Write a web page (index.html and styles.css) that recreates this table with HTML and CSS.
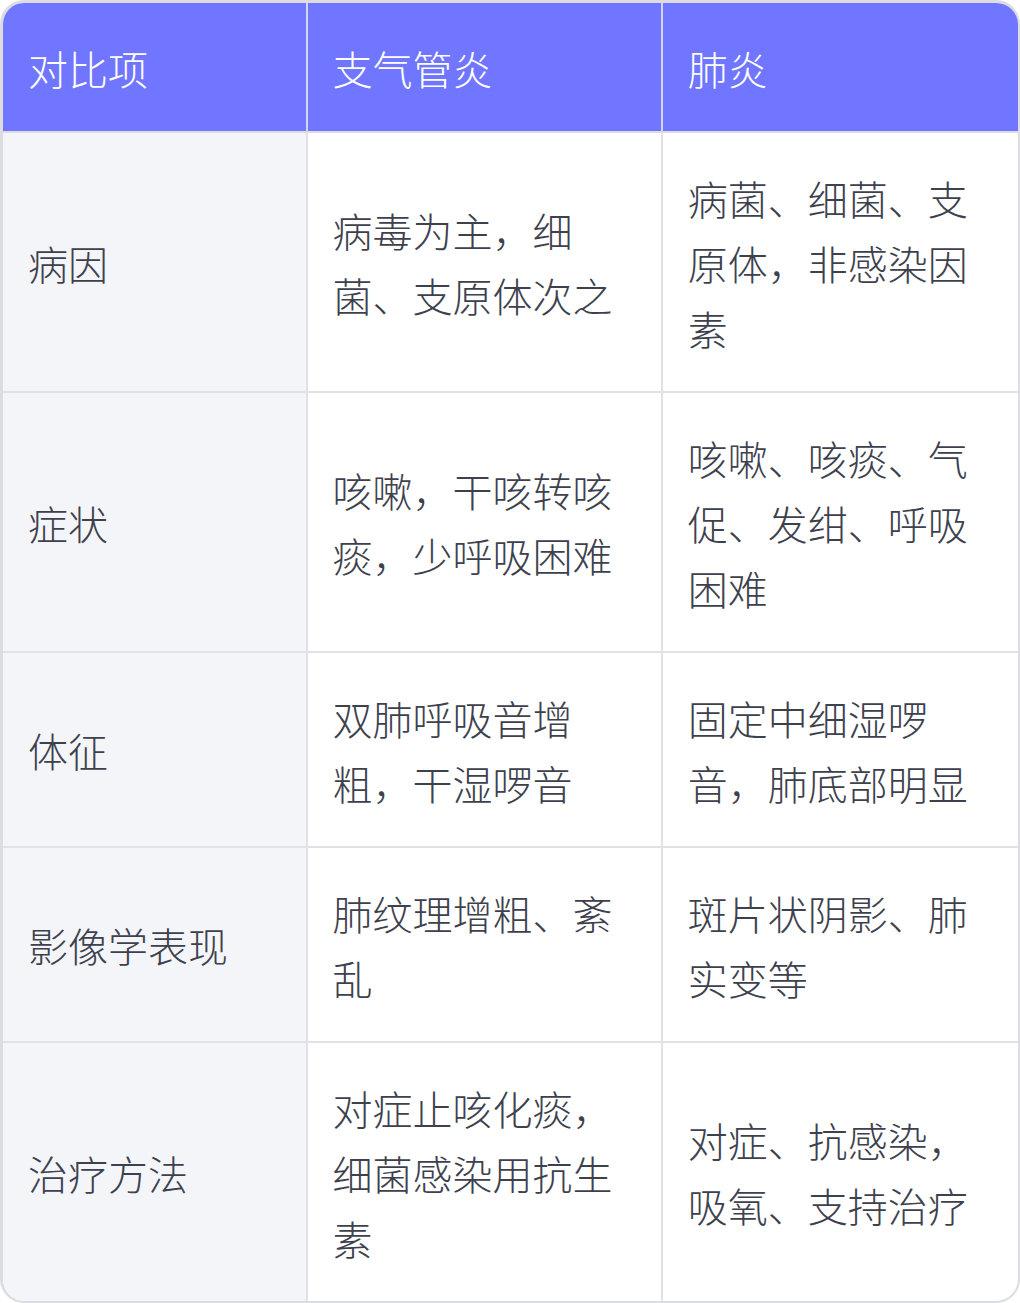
FILE: index.html
```html
<!DOCTYPE html>
<html lang="zh-CN">
<head>
<meta charset="utf-8">
<title>支气管炎与肺炎对比</title>
<link rel="stylesheet" href="styles.css">
</head>
<body>
<div class="card">
  <table class="cmp">
    <colgroup>
      <col class="c1"><col class="c2"><col class="c3">
    </colgroup>
    <thead>
      <tr><th>对比项</th><th>支气管炎</th><th>肺炎</th></tr>
    </thead>
    <tbody>
      <tr><td>病因</td><td>病毒为主，细菌、支原体次之</td><td>病菌、细菌、支原体，非感染因素</td></tr>
      <tr><td>症状</td><td>咳嗽，干咳转咳痰，少呼吸困难</td><td>咳嗽、咳痰、气促、发绀、呼吸困难</td></tr>
      <tr><td>体征</td><td>双肺呼吸音增粗，干湿啰音</td><td>固定中细湿啰音，肺底部明显</td></tr>
      <tr><td>影像学表现</td><td>肺纹理增粗、紊乱</td><td>斑片状阴影、肺实变等</td></tr>
      <tr><td>治疗方法</td><td>对症止咳化痰，细菌感染用抗生素</td><td>对症、抗感染，吸氧、支持治疗</td></tr>
    </tbody>
  </table>
</div>
</body>
</html>
```

FILE: styles.css
```css
html, body {
  margin: 0;
  padding: 0;
  background: #ffffff;
}
body {
  font-family: "Noto Sans CJK SC", "Noto Sans", sans-serif;
  font-size: 40px;
  font-weight: 300;
  color: #3d414d;
}
.card {
  width: 1020px;
  box-sizing: border-box;
  border-style: solid;
  border-color: #dcdde2;
  border-width: 3px 2px 2px 3px;
  border-radius: 24px;
  overflow: hidden;
}
.cmp {
  width: 100%;
  border-collapse: separate;
  border-spacing: 0;
  table-layout: fixed;
}
.c1 { width: 30%; }
.c2 { width: 35%; }
.c3 { width: 35%; }
.cmp th,
.cmp td {
  padding: 32.5px 24px 30.5px 25px;
  line-height: 65px;
  text-align: left;
  vertical-align: middle;
  font-weight: 300;
  border-right: 2px solid #e1e2e6;
  border-bottom: 2px solid #e1e2e6;
  word-break: normal;
  line-break: strict;
}
.cmp th:last-child,
.cmp td:last-child {
  border-right: none;
}
.cmp tbody tr:last-child td {
  border-bottom: none;
}
.cmp th {
  background: #7076ff;
  color: #ffffff;
  border-right-color: #d4d6ef;
  border-bottom-color: #dcdde2;
}
.cmp td:first-child {
  background: #f4f5f9;
}
```
